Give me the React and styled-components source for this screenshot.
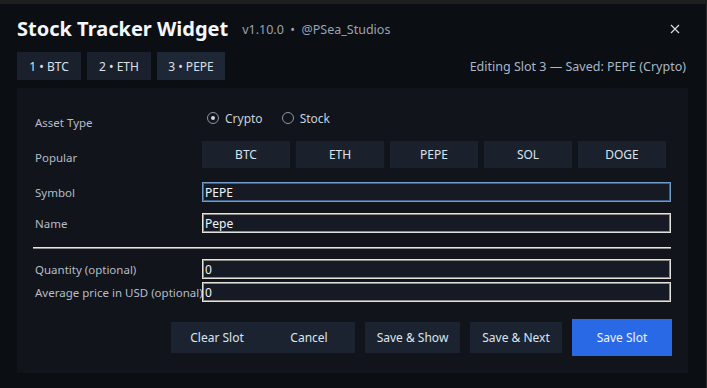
import React, { useState } from 'react';
import styled, { createGlobalStyle } from 'styled-components';

const GlobalStyle = createGlobalStyle`
  html, body {
    margin: 0;
    padding: 0;
    background: #0b0e13;
  }
  body {
    font-family: 'Noto Sans', 'Open Sans', sans-serif;
    color: #dfe6ee;
  }
`;

const TopStrip = styled.div`
  height: 4px;
  background: #1e1e1f;
`;

const Window = styled.div`
  height: 384px;
  box-sizing: border-box;
  padding: 0 18px 0 17px;
  border-right: 1px solid #26282c;
`;

const Header = styled.div`
  display: flex;
  align-items: center;
  height: 48px;
`;

const Title = styled.h1`
  margin: 0;
  font-size: 20px;
  font-weight: 700;
  color: #f4f7fb;
`;

const Meta = styled.span`
  margin-left: 14px;
  margin-top: 3px;
  font-size: 12.5px;
  color: #9aa4b2;
`;

const Close = styled.button`
  margin-left: auto;
  margin-right: 8px;
  margin-top: 2px;
  background: none;
  border: 0;
  padding: 0;
  display: flex;
  cursor: pointer;
`;

const TabBar = styled.div`
  display: flex;
  align-items: center;
  gap: 6px;
`;

const Tab = styled.button`
  height: 28px;
  width: ${({ w }) => w}px;
  border: 0;
  padding: 0;
  background: ${({ active }) => (active ? '#1e2735' : '#1a212d')};
  color: #d9e0e8;
  font-family: inherit;
  font-size: 12px;
  cursor: pointer;
`;

const Status = styled.span`
  margin-left: auto;
  margin-right: 2px;
  font-size: 12.5px;
  color: #a9b7c7;
`;

const Panel = styled.div`
  margin-top: 8px;
  height: 285px;
  box-sizing: border-box;
  background: #11141a;
  padding: 22px 16px 0 18px;
  display: flex;
  flex-direction: column;
`;

const Row = styled.div`
  display: flex;
  align-items: center;
  margin-top: ${({ mt }) => mt || 0}px;
  min-height: ${({ h }) => h || 20}px;
`;

const Label = styled.div`
  width: 167px;
  flex: none;
  font-size: 11.5px;
  color: #b5bdc8;
  padding-top: ${({ drop }) => drop || 0}px;
  white-space: nowrap;
`;

const Radios = styled.div`
  display: flex;
  align-items: center;
  gap: 19px;
  margin-top: -4px;
  margin-left: 5px;
`;

const RadioOpt = styled.label`
  display: flex;
  align-items: center;
  gap: 6px;
  font-size: 12px;
  color: #c8d0da;
  cursor: pointer;
`;

const Dot = styled.span`
  width: 10px;
  height: 10px;
  border-radius: 50%;
  border: 1px solid #8c96a3;
  display: flex;
  align-items: center;
  justify-content: center;
  &::after {
    content: '';
    width: 4px;
    height: 4px;
    border-radius: 50%;
    background: ${({ on }) => (on ? '#cfd6de' : 'transparent')};
  }
`;

const Chips = styled.div`
  display: flex;
  gap: 6px;
`;

const Chip = styled.button`
  width: 88px;
  height: 27px;
  border: 0;
  padding: 0;
  background: #1a212c;
  color: #dbe3ec;
  font-family: inherit;
  font-size: 12px;
  cursor: pointer;
`;

const Input = styled.input`
  width: 469px;
  height: 20px;
  box-sizing: border-box;
  background: #151a24;
  color: #f2f5f8;
  font-family: inherit;
  font-size: 12px;
  padding: 0 2px;
  outline: none;
  border: 1px solid ${({ focused }) => (focused ? '#6f9ccb' : '#e4e2dc')};
  box-shadow: inset 0 0 0 1px ${({ focused }) => (focused ? '#3f5f82' : '#8d8a84')};
`;

const Divider = styled.hr`
  margin: 14px 0 0 -2px;
  width: 638px;
  border: 0;
  height: 2px;
  background: linear-gradient(#e6e6e6 50%, #8a8a8a 50%);
`;

const Actions = styled.div`
  display: flex;
  align-items: center;
  justify-content: flex-end;
  gap: 10px;
  margin-top: 17px;
`;

const Group = styled.div`
  display: flex;
  background: #1b2331;
`;

const Btn = styled.button`
  width: ${({ w }) => w}px;
  height: ${({ primary }) => (primary ? 37 : 31)}px;
  border: 0;
  padding: 0;
  background: ${({ primary, flat }) => (primary ? '#2a69e6' : flat ? 'transparent' : '#1b2331')};
  color: ${({ primary }) => (primary ? '#eef3ff' : '#dce4ee')};
  font-family: inherit;
  font-size: 12px;
  cursor: pointer;
`;

const tabs = [
  { label: '1 • BTC', w: 64 },
  { label: '2 • ETH', w: 64 },
  { label: '3 • PEPE', w: 68 },
];

const popular = ['BTC', 'ETH', 'PEPE', 'SOL', 'DOGE'];

export default function App() {
  const [type, setType] = useState('crypto');
  const [symbol, setSymbol] = useState('PEPE');
  const [name, setName] = useState('Pepe');
  const [qty, setQty] = useState('0');
  const [avg, setAvg] = useState('0');

  return (
    <>
      <GlobalStyle />
      <TopStrip />
      <Window>
        <Header>
          <Title>Stock Tracker Widget</Title>
          <Meta>v1.10.0 &nbsp;•&nbsp; @PSea_Studios</Meta>
          <Close aria-label="Close">
            <svg width="10" height="10" viewBox="0 0 10 10">
              <path d="M1 1 L9 9 M9 1 L1 9" stroke="#d8dde4" strokeWidth="1.2" />
            </svg>
          </Close>
        </Header>
        <TabBar>
          {tabs.map((t, i) => (
            <Tab key={t.label} w={t.w} active={i === 2}>{t.label}</Tab>
          ))}
          <Status>Editing Slot 3 — Saved: PEPE (Crypto)</Status>
        </TabBar>
        <Panel>
          <Row>
            <Label drop={4}>Asset Type</Label>
            <Radios>
              <RadioOpt onClick={() => setType('crypto')}>
                <Dot on={type === 'crypto'} />Crypto
              </RadioOpt>
              <RadioOpt onClick={() => setType('stock')}>
                <Dot on={type === 'stock'} />Stock
              </RadioOpt>
            </Radios>
          </Row>
          <Row mt={11} h={27}>
            <Label drop={5}>Popular</Label>
            <Chips>
              {popular.map((p) => (
                <Chip key={p} onClick={() => setSymbol(p)}>{p}</Chip>
              ))}
            </Chips>
          </Row>
          <Row mt={14}>
            <Label>Symbol</Label>
            <Input focused value={symbol} onChange={(e) => setSymbol(e.target.value)} />
          </Row>
          <Row mt={11}>
            <Label>Name</Label>
            <Input value={name} onChange={(e) => setName(e.target.value)} />
          </Row>
          <Divider />
          <Row mt={10}>
            <Label>Quantity (optional)</Label>
            <Input value={qty} onChange={(e) => setQty(e.target.value)} />
          </Row>
          <Row mt={3}>
            <Label>Average price in USD (optional)</Label>
            <Input value={avg} onChange={(e) => setAvg(e.target.value)} />
          </Row>
          <Actions>
            <Group>
              <Btn w={92} flat>Clear Slot</Btn>
              <Btn w={92} flat>Cancel</Btn>
            </Group>
            <Btn w={95}>Save &amp; Show</Btn>
            <Btn w={92}>Save &amp; Next</Btn>
            <Btn w={100} primary>Save Slot</Btn>
          </Actions>
        </Panel>
      </Window>
    </>
  );
}
